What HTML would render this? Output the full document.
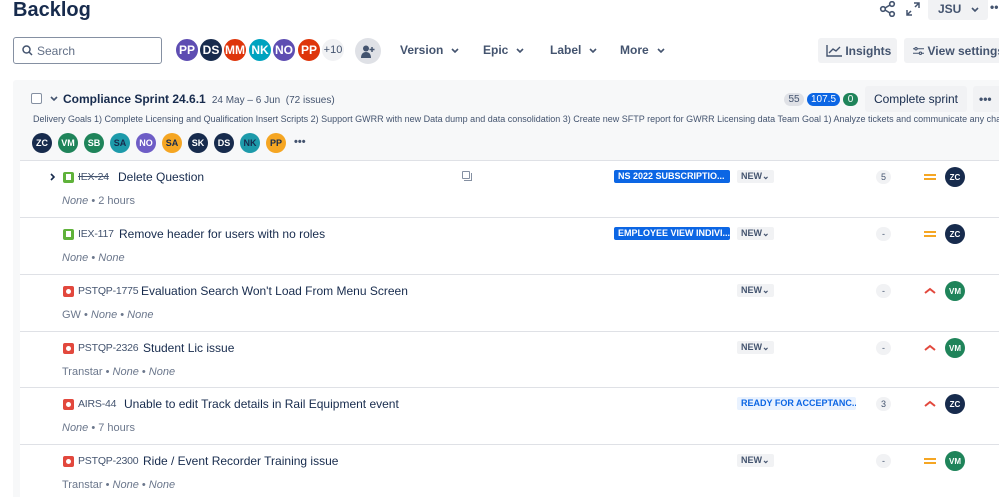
<!DOCTYPE html>
<html><head><meta charset="utf-8"><style>
*{box-sizing:border-box;margin:0;padding:0}
body{width:999px;height:497px;overflow:hidden;background:#fff;font-family:"Liberation Sans",sans-serif;color:#172b4d;position:relative;font-size:12px}
.a{position:absolute}
.av{position:absolute;border-radius:50%;color:#fff;font-weight:bold;display:flex;align-items:center;justify-content:center}
.hv{width:26px;height:26px;top:37px;font-size:12px;border:2px solid #fff}
.sv{width:20px;height:20px;top:133px;font-size:9px}
.btn{position:absolute;background:#f1f2f4;border-radius:3px;display:flex;align-items:center;font-size:12px;color:#44546f;font-weight:bold;white-space:nowrap;overflow:hidden}
.dd{position:absolute;top:43px;font-size:12px;color:#44546f;font-weight:bold;display:flex;align-items:center}
.dd svg{margin-left:8px}
.row{position:absolute;left:20px;width:979px;height:57px;background:#fff;border-top:1px solid #dfe1e6}
.ic{position:absolute;top:11px;width:11px;height:11px;border-radius:2px}
.ic.s::after{content:"";position:absolute;left:3px;top:2px;width:5px;height:6px;background:#fff}
.ic.b::after{content:"";position:absolute;left:3px;top:3px;width:5px;height:5px;border-radius:50%;background:#fff}
.key{position:absolute;top:10px;font-size:10.5px;color:#44546f;letter-spacing:-0.2px}
.ttl{position:absolute;top:9px;font-size:12px;color:#172b4d}
.sub{position:absolute;top:34px;left:42px;font-size:11px;color:#6b778c}
.sub i{font-style:italic}
.epic{position:absolute;top:9px;left:594px;width:116px;height:13px;background:#0c66e4;color:#fff;font-size:9px;font-weight:bold;border-radius:2px;padding-left:4px;line-height:13px;white-space:nowrap;overflow:hidden}
.st{position:absolute;top:9px;left:717px;height:13px;background:#f1f2f4;font-size:9px;font-weight:bold;border-radius:2px;padding:0 4px;line-height:13px;color:#44546f;white-space:nowrap;overflow:hidden}
.pt{position:absolute;top:9px;left:856px;width:15px;height:14px;background:#f1f2f4;border-radius:7px;font-size:9px;text-align:center;line-height:14px;color:#44546f}
.pr{position:absolute;left:904px;top:10px}
.ra{position:absolute;left:925px;top:6px;width:20px;height:20px;font-size:8px}
</style></head><body>
<div class="a" style="left:13px;top:-1px;font-size:20px;font-weight:bold;color:#172b4d">Backlog</div>
<svg class="a" style="left:879px;top:1px" width="18" height="16" viewBox="0 0 18 16" fill="none" stroke="#44546f" stroke-width="1.6"><circle cx="4" cy="8" r="2.3"/><circle cx="13" cy="3" r="2.3"/><circle cx="13" cy="13" r="2.3"/><path d="M6 7l5-3M6 9l5 3"/></svg>
<svg class="a" style="left:906px;top:2px" width="14" height="14" viewBox="0 0 14 14" fill="none" stroke="#44546f" stroke-width="1.5"><path d="M8 1h5v5M13 1L9 5M6 13H1V8M1 13l4-4"/></svg>
<div class="btn" style="left:928px;top:-2px;width:60px;height:22px;padding-left:10px">JSU <svg style="margin-left:10px" width="8" height="5" viewBox="0 0 8 5" fill="none" stroke="#44546f" stroke-width="1.6"><path d="M1 1l3 3 3-3"/></svg></div>
<div class="a" style="left:990px;top:0;font-weight:bold;color:#44546f">••</div>
<div class="a" style="left:13px;top:37px;width:149px;height:27px;border:1px solid #8590a2;border-radius:3px"></div>
<svg class="a" style="left:22px;top:45px" width="11" height="11" viewBox="0 0 11 11" fill="none" stroke="#44546f" stroke-width="1.5"><circle cx="4.5" cy="4.5" r="3.5"/><path d="M7 7l3 3"/></svg>
<div class="a" style="left:37px;top:44px;color:#626f86;font-size:12px">Search</div>
<div class="av hv" style="left:174px;background:#5e4db2">PP</div>
<div class="av hv" style="left:198px;background:#172b4d">DS</div>
<div class="av hv" style="left:222px;background:#de350b">MM</div>
<div class="av hv" style="left:247px;background:#00a3bf">NK</div>
<div class="av hv" style="left:271px;background:#5e4db2">NO</div>
<div class="av hv" style="left:296px;background:#de350b">PP</div>
<div class="av hv" style="left:320px;background:#f1f2f4;color:#44546f;font-weight:normal;font-size:11px">+10</div>
<div class="av" style="left:355px;top:38px;width:26px;height:26px;background:#dfe1e6">
<svg width="14" height="13" viewBox="0 0 14 13" fill="#44546f"><circle cx="5" cy="3.5" r="3"/><path d="M0 13c0-4 2-6 5-6s5 2 5 6z"/><path d="M11 2v5M8.5 4.5h5" stroke="#44546f" stroke-width="1.5"/></svg></div>
<div class="dd" style="left:400px">Version<svg width="8" height="5" viewBox="0 0 8 5" fill="none" stroke="#44546f" stroke-width="1.6"><path d="M1 1l3 3 3-3"/></svg></div>
<div class="dd" style="left:483px">Epic<svg width="8" height="5" viewBox="0 0 8 5" fill="none" stroke="#44546f" stroke-width="1.6"><path d="M1 1l3 3 3-3"/></svg></div>
<div class="dd" style="left:550px">Label<svg width="8" height="5" viewBox="0 0 8 5" fill="none" stroke="#44546f" stroke-width="1.6"><path d="M1 1l3 3 3-3"/></svg></div>
<div class="dd" style="left:620px">More<svg width="8" height="5" viewBox="0 0 8 5" fill="none" stroke="#44546f" stroke-width="1.6"><path d="M1 1l3 3 3-3"/></svg></div>
<div class="btn" style="left:818px;top:38px;width:79px;height:25px;padding-left:8px"><svg width="16" height="12" viewBox="0 0 16 12" fill="none" stroke="#44546f" stroke-width="1.4"><path d="M1 0v11h15M3 8l4-4 3 2 4-4"/></svg>&nbsp;Insights</div>
<div class="btn" style="left:904px;top:38px;width:100px;height:25px;padding-left:9px"><svg width="15" height="12" viewBox="0 0 15 12" fill="none" stroke="#44546f" stroke-width="1.4"><path d="M0 3h15M0 9h15"/><circle cx="4" cy="3" r="1.6" fill="#f1f2f4"/><circle cx="10" cy="9" r="1.6" fill="#f1f2f4"/></svg>&nbsp;View settings</div>
<div class="a" style="left:13px;top:80px;width:986px;height:417px;background:#f7f8f9;border-radius:3px 0 0 0"></div>
<div class="a" style="left:31px;top:93px;width:11px;height:11px;border:1.5px solid #8590a2;border-radius:2px;background:#fff"></div>
<svg class="a" style="left:50px;top:96px" width="8" height="5" viewBox="0 0 8 5" fill="none" stroke="#44546f" stroke-width="1.6"><path d="M1 1l3 3 3-3"/></svg>
<div class="a" style="left:63px;top:92px;font-size:12px;font-weight:bold">Compliance Sprint 24.6.1 <span style="font-weight:normal;font-size:10px;color:#44546f">&nbsp;24 May – 6 Jun &nbsp;(72 issues)</span></div>
<div class="a" style="left:33px;top:114px;font-size:9px;color:#44546f;white-space:nowrap">Delivery Goals 1) Complete Licensing and Qualification Insert Scripts 2) Support GWRR with new Data dump and data consolidation 3) Create new SFTP report for GWRR Licensing data Team Goal 1) Analyze tickets and communicate any cha...</div>
<div class="a" style="left:784px;top:93px;width:20px;height:13px;background:#dfe1e6;border-radius:7px;font-size:10px;text-align:center;line-height:13px;color:#44546f">55</div>
<div class="a" style="left:807px;top:93px;width:33px;height:13px;background:#0c66e4;border-radius:7px;font-size:10px;text-align:center;line-height:13px;color:#fff">107.5</div>
<div class="a" style="left:843px;top:93px;width:15px;height:13px;background:#1f845a;border-radius:7px;font-size:10px;text-align:center;line-height:13px;color:#fff">0</div>
<div class="btn" style="left:865px;top:86px;width:102px;height:26px;justify-content:center;color:#172b4d;font-weight:normal">Complete sprint</div>
<div class="btn" style="left:973px;top:86px;width:30px;height:26px;padding-left:6px;color:#44546f">•••</div>
<div class="av sv" style="left:32px;background:#172b4d">ZC</div>
<div class="av sv" style="left:58px;background:#1f845a">VM</div>
<div class="av sv" style="left:84px;background:#1f845a">SB</div>
<div class="av sv" style="left:110px;background:#1d9aaa;color:#172b4d">SA</div>
<div class="av sv" style="left:136px;background:#6e5dc6">NO</div>
<div class="av sv" style="left:162px;background:#f5a623;color:#172b4d">SA</div>
<div class="av sv" style="left:188px;background:#172b4d">SK</div>
<div class="av sv" style="left:214px;background:#172b4d">DS</div>
<div class="av sv" style="left:240px;background:#1d9aaa;color:#172b4d">NK</div>
<div class="av sv" style="left:266px;background:#f5a623;color:#172b4d">PP</div>
<div class="a" style="left:294px;top:136px;font-weight:bold;color:#44546f;font-size:11px">•••</div>

<div class="row" style="top:160px">
 <svg class="a" style="left:30px;top:12px" width="5" height="8" viewBox="0 0 5 8" fill="none" stroke="#172b4d" stroke-width="1.6"><path d="M1 1l3 3-3 3"/></svg>
 <div class="ic s" style="left:43px;background:#5fb23a"></div>
 <div class="key" style="left:58px;text-decoration:line-through">IEX-24</div>
 <div class="ttl" style="left:98px">Delete Question</div>
 <div class="a" style="left:442px;top:10px;width:8px;height:8px;border:1.2px solid #8590a2;border-radius:1px"></div>
 <div class="a" style="left:444px;top:12px;width:8px;height:8px;border-right:1.2px solid #8590a2;border-bottom:1.2px solid #8590a2"></div>
 <div class="sub"><i>None</i> • 2 hours</div>
 <div class="epic">NS 2022 SUBSCRIPTIO...</div>
 <div class="st">NEW⌄</div>
 <div class="pt">5</div>
 <div class="pr" style="top:13px;width:12px;height:6px;border-top:2px solid #f5a623;border-bottom:2px solid #f5a623"></div>
 <div class="av ra" style="background:#172b4d">ZC</div>
</div>
<div class="row" style="top:217px">
 <div class="ic s" style="left:43px;background:#5fb23a"></div>
 <div class="key" style="left:58px">IEX-117</div>
 <div class="ttl" style="left:99px">Remove header for users with no roles</div>
 <div class="sub"><i>None</i> • <i>None</i></div>
 <div class="epic">EMPLOYEE VIEW INDIVI...</div>
 <div class="st">NEW⌄</div>
 <div class="pt">-</div>
 <div class="pr" style="top:13px;width:12px;height:6px;border-top:2px solid #f5a623;border-bottom:2px solid #f5a623"></div>
 <div class="av ra" style="background:#172b4d">ZC</div>
</div>
<div class="row" style="top:274px">
 <div class="ic b" style="left:43px;background:#e2483d"></div>
 <div class="key" style="left:58px">PSTQP-1775</div>
 <div class="ttl" style="left:121px">Evaluation Search Won't Load From Menu Screen</div>
 <div class="sub">GW • <i>None</i> • <i>None</i></div>
 <div class="st">NEW⌄</div>
 <div class="pt">-</div>
 <svg class="pr" style="top:12px" width="12" height="7" viewBox="0 0 12 7" fill="none" stroke="#e2483d" stroke-width="2"><path d="M1 6l5-4 5 4"/></svg>
 <div class="av ra" style="background:#1f845a">VM</div>
</div>
<div class="row" style="top:331px">
 <div class="ic b" style="left:43px;background:#e2483d"></div>
 <div class="key" style="left:58px">PSTQP-2326</div>
 <div class="ttl" style="left:123px">Student Lic issue</div>
 <div class="sub">Transtar • <i>None</i> • <i>None</i></div>
 <div class="st">NEW⌄</div>
 <div class="pt">-</div>
 <svg class="pr" style="top:12px" width="12" height="7" viewBox="0 0 12 7" fill="none" stroke="#e2483d" stroke-width="2"><path d="M1 6l5-4 5 4"/></svg>
 <div class="av ra" style="background:#1f845a">VM</div>
</div>
<div class="row" style="top:387px">
 <div class="ic b" style="left:43px;background:#e2483d"></div>
 <div class="key" style="left:58px">AIRS-44</div>
 <div class="ttl" style="left:104px">Unable to edit Track details in Rail Equipment event</div>
 <div class="sub"><i>None</i> • 7 hours</div>
 <div class="st" style="left:717px;background:#e9f2ff;color:#0c66e4;width:119px">READY FOR ACCEPTANC...</div>
 <div class="pt">3</div>
 <svg class="pr" style="top:12px" width="12" height="7" viewBox="0 0 12 7" fill="none" stroke="#e2483d" stroke-width="2"><path d="M1 6l5-4 5 4"/></svg>
 <div class="av ra" style="background:#172b4d">ZC</div>
</div>
<div class="row" style="top:444px">
 <div class="ic b" style="left:43px;background:#e2483d"></div>
 <div class="key" style="left:58px">PSTQP-2300</div>
 <div class="ttl" style="left:123px">Ride / Event Recorder Training issue</div>
 <div class="sub">Transtar • <i>None</i> • <i>None</i></div>
 <div class="st">NEW⌄</div>
 <div class="pt">-</div>
 <div class="pr" style="top:13px;width:12px;height:6px;border-top:2px solid #f5a623;border-bottom:2px solid #f5a623"></div>
 <div class="av ra" style="background:#1f845a">VM</div>
</div>
</body></html>
